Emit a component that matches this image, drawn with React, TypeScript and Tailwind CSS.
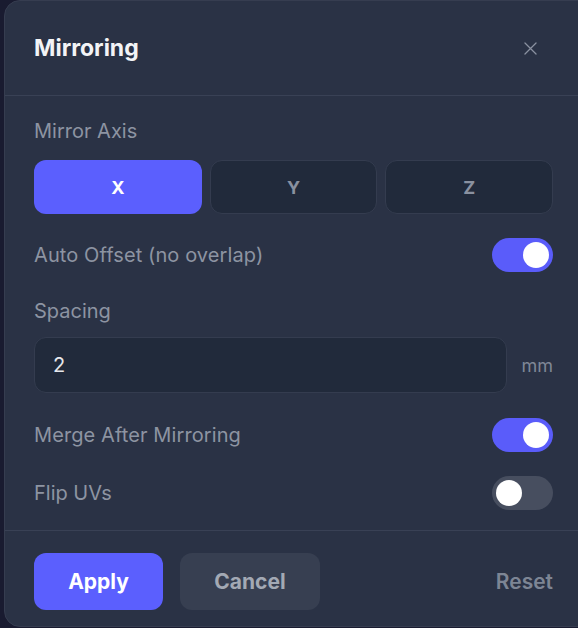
import { useState } from "react";

const Toggle = ({ on, onClick }: { on: boolean; onClick: () => void }) => (
  <button
    onClick={onClick}
    className={`relative h-[34px] w-[61px] shrink-0 rounded-full ${
      on ? "bg-[#5a5cfa]" : "bg-[#474e5f]"
    }`}
  >
    <span
      className={`absolute top-[4px] h-[26px] w-[26px] rounded-full bg-white ${
        on ? "left-[31px]" : "left-[4px]"
      }`}
    />
  </button>
);

const App = () => {
  const [axis, setAxis] = useState("X");
  const [autoOffset, setAutoOffset] = useState(true);
  const [merge, setMerge] = useState(true);
  const [flip, setFlip] = useState(false);

  return (
    <div
      className="h-[628px] w-[578px] overflow-hidden bg-[#191b30] pl-1"
      style={{ fontFamily: "Inter, 'Noto Sans', sans-serif" }}
    >
      <div className="h-[627px] w-[590px] rounded-2xl border border-[#363d50] bg-[#2a3245]">
        <div className="flex h-[94px] items-center justify-between pl-[29px] pr-[53px]">
          <h2 className="text-[23px] font-bold text-[#f3f4f6]">Mirroring</h2>
          <svg
            viewBox="0 0 24 24"
            className="h-[19px] w-[19px] text-[#8a91a0]"
            fill="none"
            stroke="currentColor"
            strokeWidth={1.6}
            strokeLinecap="round"
          >
            <path d="M5 5l14 14M19 5L5 19" />
          </svg>
        </div>
        <div className="border-t border-[#394155]" />

        <div className="w-[577px] px-[29px] pt-[21px] pb-[20px]">
          <p className="mb-[15px] text-[20px] leading-[28px] text-[#8d94a2]">Mirror Axis</p>
          <div className="grid grid-cols-3 gap-2">
            {["X", "Y", "Z"].map((a) => (
              <button
                key={a}
                onClick={() => setAxis(a)}
                className={`h-[54px] rounded-xl text-[18px] font-bold ${
                  axis === a
                    ? "bg-[#5b5ffe] text-white"
                    : "border border-[#343c4f] bg-[#212a3b] text-[#8a91a0]"
                }`}
              >
                {a}
              </button>
            ))}
          </div>

          <div className="mt-[24px] flex items-center justify-between">
            <span className="text-[20px] tracking-[0.1px] text-[#8d94a2]">Auto Offset (no overlap)</span>
            <Toggle on={autoOffset} onClick={() => setAutoOffset(!autoOffset)} />
          </div>

          <p className="mt-[25px] text-[20px] leading-[28px] text-[#8d94a2]">Spacing</p>
          <div className="mt-[12px] flex items-center gap-[14px]">
            <div className="flex h-[56px] flex-1 items-center rounded-xl border border-[#343c4f] bg-[#212a3b] px-[18px] text-[20px] text-[#e5e7eb]">
              2
            </div>
            <span className="text-[18px] text-[#7f8796]">mm</span>
          </div>

          <div className="mt-[25px] flex items-center justify-between">
            <span className="text-[20px] tracking-[0.1px] text-[#8d94a2]">Merge After Mirroring</span>
            <Toggle on={merge} onClick={() => setMerge(!merge)} />
          </div>
          <div className="mt-[24px] flex items-center justify-between">
            <span className="text-[20px] text-[#8d94a2]">Flip UVs</span>
            <Toggle on={flip} onClick={() => setFlip(!flip)} />
          </div>
        </div>

        <div className="border-t border-[#394155]" />
        <div className="flex w-[577px] items-center px-[29px] pt-[22px]">
          <button className="h-[57px] w-[129px] rounded-xl bg-[#5b5ffe] text-[21px] font-bold text-white">
            Apply
          </button>
          <button className="ml-[17px] h-[57px] w-[140px] rounded-xl bg-[#373f51] text-[21px] font-bold text-[#a3a9b4]">
            Cancel
          </button>
          <button className="ml-auto text-[21px] font-semibold text-[#7d8594]">Reset</button>
        </div>
      </div>
    </div>
  );
};

export default App;
